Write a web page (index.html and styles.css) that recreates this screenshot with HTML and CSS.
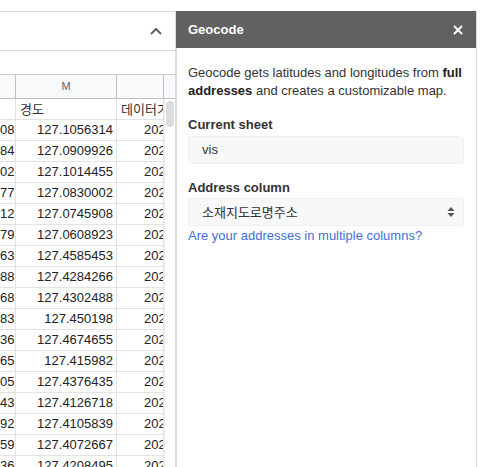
FILE: index.html
```html
<!DOCTYPE html>
<html>
<head>
<meta charset="utf-8">
<link rel="stylesheet" href="styles.css">
</head>
<body>
<div class="page">
  <div class="sheet">
    <div class="topbar">
      <svg class="chev" width="12" height="8" viewBox="0 0 12 8"><path d="M1 7 L6 2 L11 7" fill="none" stroke="#5f6368" stroke-width="2"/></svg>
    </div>
    <div class="fbar"></div>
    <div class="gridwrap">
      <div class="cells">
        <div class="row hdr"><div class="c"></div><div class="c mid">M</div><div class="c"></div></div>
        <div class="row"><div class="c"></div><div class="c txt">경도</div><div class="c txt">데이터기준일자</div></div>
        <div class="row"><div class="c num">08</div><div class="c num">127.1056314</div><div class="c date">2021-</div></div>
        <div class="row"><div class="c num">84</div><div class="c num">127.0909926</div><div class="c date">2021-</div></div>
        <div class="row"><div class="c num">02</div><div class="c num">127.1014455</div><div class="c date">2021-</div></div>
        <div class="row"><div class="c num">77</div><div class="c num">127.0830002</div><div class="c date">2021-</div></div>
        <div class="row"><div class="c num">12</div><div class="c num">127.0745908</div><div class="c date">2021-</div></div>
        <div class="row"><div class="c num">79</div><div class="c num">127.0608923</div><div class="c date">2021-</div></div>
        <div class="row"><div class="c num">63</div><div class="c num">127.4585453</div><div class="c date">2021-</div></div>
        <div class="row"><div class="c num">88</div><div class="c num">127.4284266</div><div class="c date">2021-</div></div>
        <div class="row"><div class="c num">68</div><div class="c num">127.4302488</div><div class="c date">2021-</div></div>
        <div class="row"><div class="c num">83</div><div class="c num">127.450198</div><div class="c date">2021-</div></div>
        <div class="row"><div class="c num">36</div><div class="c num">127.4674655</div><div class="c date">2021-</div></div>
        <div class="row"><div class="c num">65</div><div class="c num">127.415982</div><div class="c date">2021-</div></div>
        <div class="row"><div class="c num">05</div><div class="c num">127.4376435</div><div class="c date">2021-</div></div>
        <div class="row"><div class="c num">43</div><div class="c num">127.4126718</div><div class="c date">2021-</div></div>
        <div class="row"><div class="c num">92</div><div class="c num">127.4105839</div><div class="c date">2021-</div></div>
        <div class="row"><div class="c num">59</div><div class="c num">127.4072667</div><div class="c date">2021-</div></div>
        <div class="row"><div class="c num">36</div><div class="c num">127.4208495</div><div class="c date">2021-</div></div>
      </div>
      <div class="vscroll">
        <div class="vhead"></div>
        <div class="track"><div class="thumb"></div></div>
      </div>
    </div>
  </div>
  <div class="panel">
    <div class="phead">
      <span class="ptitle">Geocode</span>
      <svg class="close" width="10" height="10" viewBox="0 0 10 10"><path d="M1 1 L9 9 M9 1 L1 9" stroke="#fff" stroke-width="2"/></svg>
    </div>
    <div class="pbody">
      <p class="intro">Geocode gets latitudes and longitudes from <b>full addresses</b> and creates a customizable map.</p>
      <div class="label">Current sheet</div>
      <div class="field">vis</div>
      <div class="label second">Address column</div>
      <div class="field select">
        <span>소재지도로명주소</span>
        <svg width="8" height="12" viewBox="0 0 8 12"><path d="M4 1 L7.5 5 L0.5 5 Z M4 11 L7.5 7 L0.5 7 Z" fill="#555"/></svg>
      </div>
      <a class="link">Are your addresses in multiple columns?</a>
    </div>
  </div>
  <div class="rest"></div>
</div>
</body>
</html>
```
FILE: styles.css
```css
html, body {
  margin: 0;
  padding: 0;
  background: #fff;
}
body {
  font-family: "Liberation Sans", Arial, sans-serif;
  overflow: hidden;
}
.page {
  display: flex;
  margin-top: 11px;
  height: 456px;
  overflow: hidden;
}
.sheet {
  width: 176px;
  flex: none;
  display: flex;
  flex-direction: column;
}
.topbar {
  box-sizing: border-box;
  height: 40px;
  border-top: 1px solid #dadce0;
  border-bottom: 1px solid #dadce0;
  border-right: 1px solid #dadce0;
  display: flex;
  align-items: center;
  justify-content: flex-end;
  padding-right: 13px;
}
.fbar {
  box-sizing: border-box;
  height: 24px;
  border-bottom: 1px solid #c7c7c7;
  border-right: 1px solid #dadce0;
}
.gridwrap {
  display: flex;
  flex: 1;
  overflow: hidden;
}
.cells {
  width: 164px;
  flex: none;
}
.row {
  display: grid;
  grid-template-columns: 16px 101px 47px;
  height: 21px;
}
.c {
  box-sizing: border-box;
  border-right: 1px solid #e2e3e3;
  border-bottom: 1px solid #e2e3e3;
  font-size: 13px;
  color: #222;
  line-height: 20px;
  white-space: nowrap;
  overflow: hidden;
}
.hdr {
  height: 24px;
  background: #f8f9fa;
}
.hdr .c {
  border-right: 1px solid #c0c0c0;
  border-bottom: 1px solid #c0c0c0;
  line-height: 23px;
  font-size: 11px;
  color: #5f6368;
}
.mid {
  text-align: center;
}
.num {
  text-align: right;
  padding-right: 3px;
}
.row .num:first-child {
  padding-right: 2px;
}
.txt {
  font-family: "Noto Sans CJK KR", "Liberation Sans", sans-serif;
  padding-left: 4px;
  font-size: 13px;
  line-height: 20px;
  color: #333;
}
.date {
  padding-left: 27px;
}
.vscroll {
  box-sizing: border-box;
  width: 12px;
  flex: none;
  border-right: 1px solid #dadce0;
  display: flex;
  flex-direction: column;
}
.vhead {
  height: 24px;
  box-sizing: border-box;
  background: #f8f9fa;
  border-bottom: 1px solid #c0c0c0;
  flex: none;
}
.track {
  flex: 1;
  border-left: 1px solid #ececec;
  padding: 2px 2px 0 1px;
}
.thumb {
  width: 8px;
  height: 26px;
  border-radius: 4px;
  background: #dadce0;
}
.panel {
  box-sizing: border-box;
  width: 301px;
  flex: none;
  border-left: 1px solid #dadce0;
  border-right: 1px solid #dadce0;
  display: flex;
  flex-direction: column;
}
.phead {
  height: 37px;
  margin-left: -1px;
  background: #616161;
  display: flex;
  align-items: center;
  justify-content: space-between;
  padding: 0 13px 0 12px;
}
.ptitle {
  color: #fff;
  font-weight: bold;
  font-size: 13px;
}
.pbody {
  padding: 16px 12px 0 11px;
  color: #333;
  font-size: 13px;
  line-height: 18px;
}
.intro {
  margin: 0 0 16px 0;
}
.intro b {
  color: #222;
}
.label {
  font-weight: bold;
  color: #333;
  height: 18px;
  margin-bottom: 2px;
}
.label.second {
  margin-top: 15px;
  margin-bottom: 1px;
}
.field {
  box-sizing: border-box;
  height: 28px;
  background: #f8f8f8;
  border: 1px solid #f0f0f0;
  border-radius: 3px;
  padding: 0 13px;
  line-height: 26px;
  color: #333;
  display: flex;
  align-items: center;
  justify-content: space-between;
}
.select span {
  font-family: "Noto Sans CJK KR", "Liberation Sans", sans-serif;
  font-size: 13px;
}
.select svg {
  margin-right: -5px;
}
.link {
  display: block;
  color: #3f6fd6;
  text-decoration: none;
  margin-top: 1px;
}
.rest {
  flex: 1;
}
```
